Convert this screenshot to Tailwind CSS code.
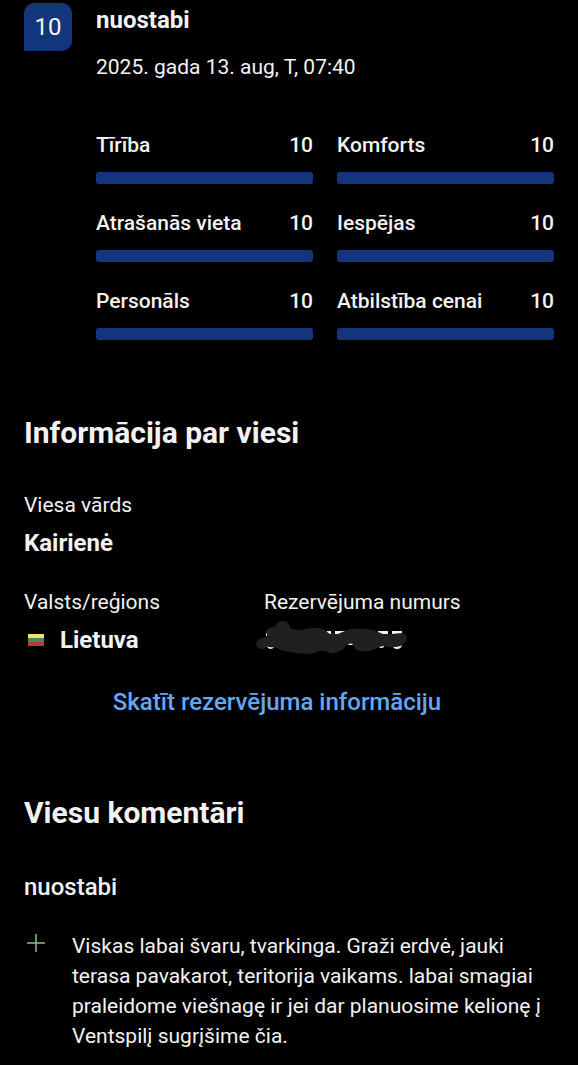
<!DOCTYPE html>
<html lang="lv">
<head>
<meta charset="utf-8">
<meta name="viewport" content="width=device-width, initial-scale=1">
<title>Viesu komentāri</title>
<script src="https://cdn.jsdelivr.net/npm/@tailwindcss/browser@4"></script>
</head>
<body class="bg-black font-[Roboto,sans-serif] text-[21px] leading-[30px] text-[#f2f2f2]">
<main class="px-6 pt-[3px] pb-3">
  <header class="flex gap-6">
    <div class="flex size-12 shrink-0 items-center justify-center rounded-[10px] rounded-bl-none bg-[#13357b] text-2xl">10</div>
    <div>
      <h1 class="pt-[2px] text-2xl leading-[30px] font-bold">nuostabi</h1>
      <p class="mt-[17px]">2025. gada 13. aug, T, 07:40</p>
    </div>
  </header>

  <section class="mt-12 ml-[72px] grid grid-cols-2 gap-x-6 gap-y-6 font-medium">
    <div>
      <div class="flex justify-between"><span>Tīrība</span><span>10</span></div>
      <div class="mt-3 h-3 rounded-[3px] bg-[#13357b]"></div>
    </div>
    <div>
      <div class="flex justify-between"><span>Komforts</span><span>10</span></div>
      <div class="mt-3 h-3 rounded-[3px] bg-[#13357b]"></div>
    </div>
    <div>
      <div class="flex justify-between"><span>Atrašanās vieta</span><span>10</span></div>
      <div class="mt-3 h-3 rounded-[3px] bg-[#13357b]"></div>
    </div>
    <div>
      <div class="flex justify-between"><span>Iespējas</span><span>10</span></div>
      <div class="mt-3 h-3 rounded-[3px] bg-[#13357b]"></div>
    </div>
    <div>
      <div class="flex justify-between"><span>Personāls</span><span>10</span></div>
      <div class="mt-3 h-3 rounded-[3px] bg-[#13357b]"></div>
    </div>
    <div>
      <div class="flex justify-between"><span>Atbilstība cenai</span><span>10</span></div>
      <div class="mt-3 h-3 rounded-[3px] bg-[#13357b]"></div>
    </div>
  </section>

  <section class="mt-[73px]">
    <h2 class="text-3xl leading-10 font-bold">Informācija par viesi</h2>
    <dl class="mt-[37px] grid grid-cols-[216px_1fr] gap-x-6 gap-y-[29px]">
      <div class="col-span-2">
        <dt>Viesa vārds</dt>
        <dd class="mt-2 text-2xl leading-[30px] font-bold">Kairienė</dd>
      </div>
      <div>
        <dt>Valsts/reģions</dt>
        <dd class="mt-2 flex items-center gap-4 text-2xl leading-[30px] font-bold">
          <svg class="ml-1 h-3 w-4" viewBox="0 0 16 12" aria-hidden="true"><path fill="#eee26a" d="M0 0h16v4H0z"/><path fill="#468a5c" d="M0 4h16v4H0z"/><path fill="#b93a32" d="M0 8h16v4H0z"/></svg>
          Lietuva
        </dd>
      </div>
      <div>
        <dt>Rezervējuma numurs</dt>
        <dd class="mt-[2px] -ml-2">
          <svg class="h-9 w-[152px]" viewBox="0 0 152 36" role="img" aria-label="Aizklāts numurs">
            <path fill="#202020" d="M0 26Q0 22 4 20Q7 18 11 18Q8 12 12 10Q15 8 19 8Q21 2 27 2Q32 2 33 6Q34 9 36 10Q41 11 46 11Q51 9 56 9Q63 8 66 10Q71 11 72 14L79 14Q84 12 91 11Q99 9 107 10Q116 10 122 13Q125 15 129 15Q137 16 144 14Q150 14 151 19Q151 22 148 24Q144 28 139 28Q133 29 127 27Q125 28 119 30Q113 33 104 32Q99 31 97 26Q93 25 90 26Q88 31 84 32Q77 36 72 33Q68 31 64 32Q58 35 51 35Q42 35 34 33Q26 32 21 29Q16 29 12 26Q10 30 6 30Q1 30 0 26Z"/>
            <path fill="#f2f2f2" d="M10 15l1-1v3h-1zM11 27q3 2 7 1-1 2-4 2-2 0-3-3zM71 12h4v3h-1l-3-2zM79 12h10l-5 2-2 1h-3zM92 25q3-1 5 0l-1 1h-3zM122 12h10v3h-5l-5-2zM136 12h10v2l-10 1zM123 28l5-1v1q-3 2-5 0zM137 28q6 0 9-2-1 4-5 4-3 0-4-2z"/>
          </svg>
        </dd>
      </div>
    </dl>
    <div class="mt-[31px] pr-6 text-center"><a href="#" class="text-2xl leading-8 font-medium text-[#62a8f5]">Skatīt rezervējuma informāciju</a></div>
  </section>

  <section class="mt-[75px]">
    <h2 class="text-3xl leading-10 font-bold">Viesu komentāri</h2>
    <h3 class="mt-[38px] text-2xl leading-8 font-medium">nuostabi</h3>
    <div class="mt-7 flex gap-6">
      <svg class="size-6 shrink-0" viewBox="0 0 24 24" fill="none" stroke="#81c784" stroke-width="1.5" stroke-linecap="round" role="img" aria-label="Pozitīvi"><path d="M12 3.500v17M3.500 12h17"/></svg>
      <p>Viskas labai švaru, tvarkinga. Graži erdvė, jauki terasa pavakarot, teritorija vaikams. labai smagiai praleidome viešnagę ir jei dar planuosime kelionę į Ventspilį sugrįšime čia.</p>
    </div>
  </section>
</main>
</body>
</html>
